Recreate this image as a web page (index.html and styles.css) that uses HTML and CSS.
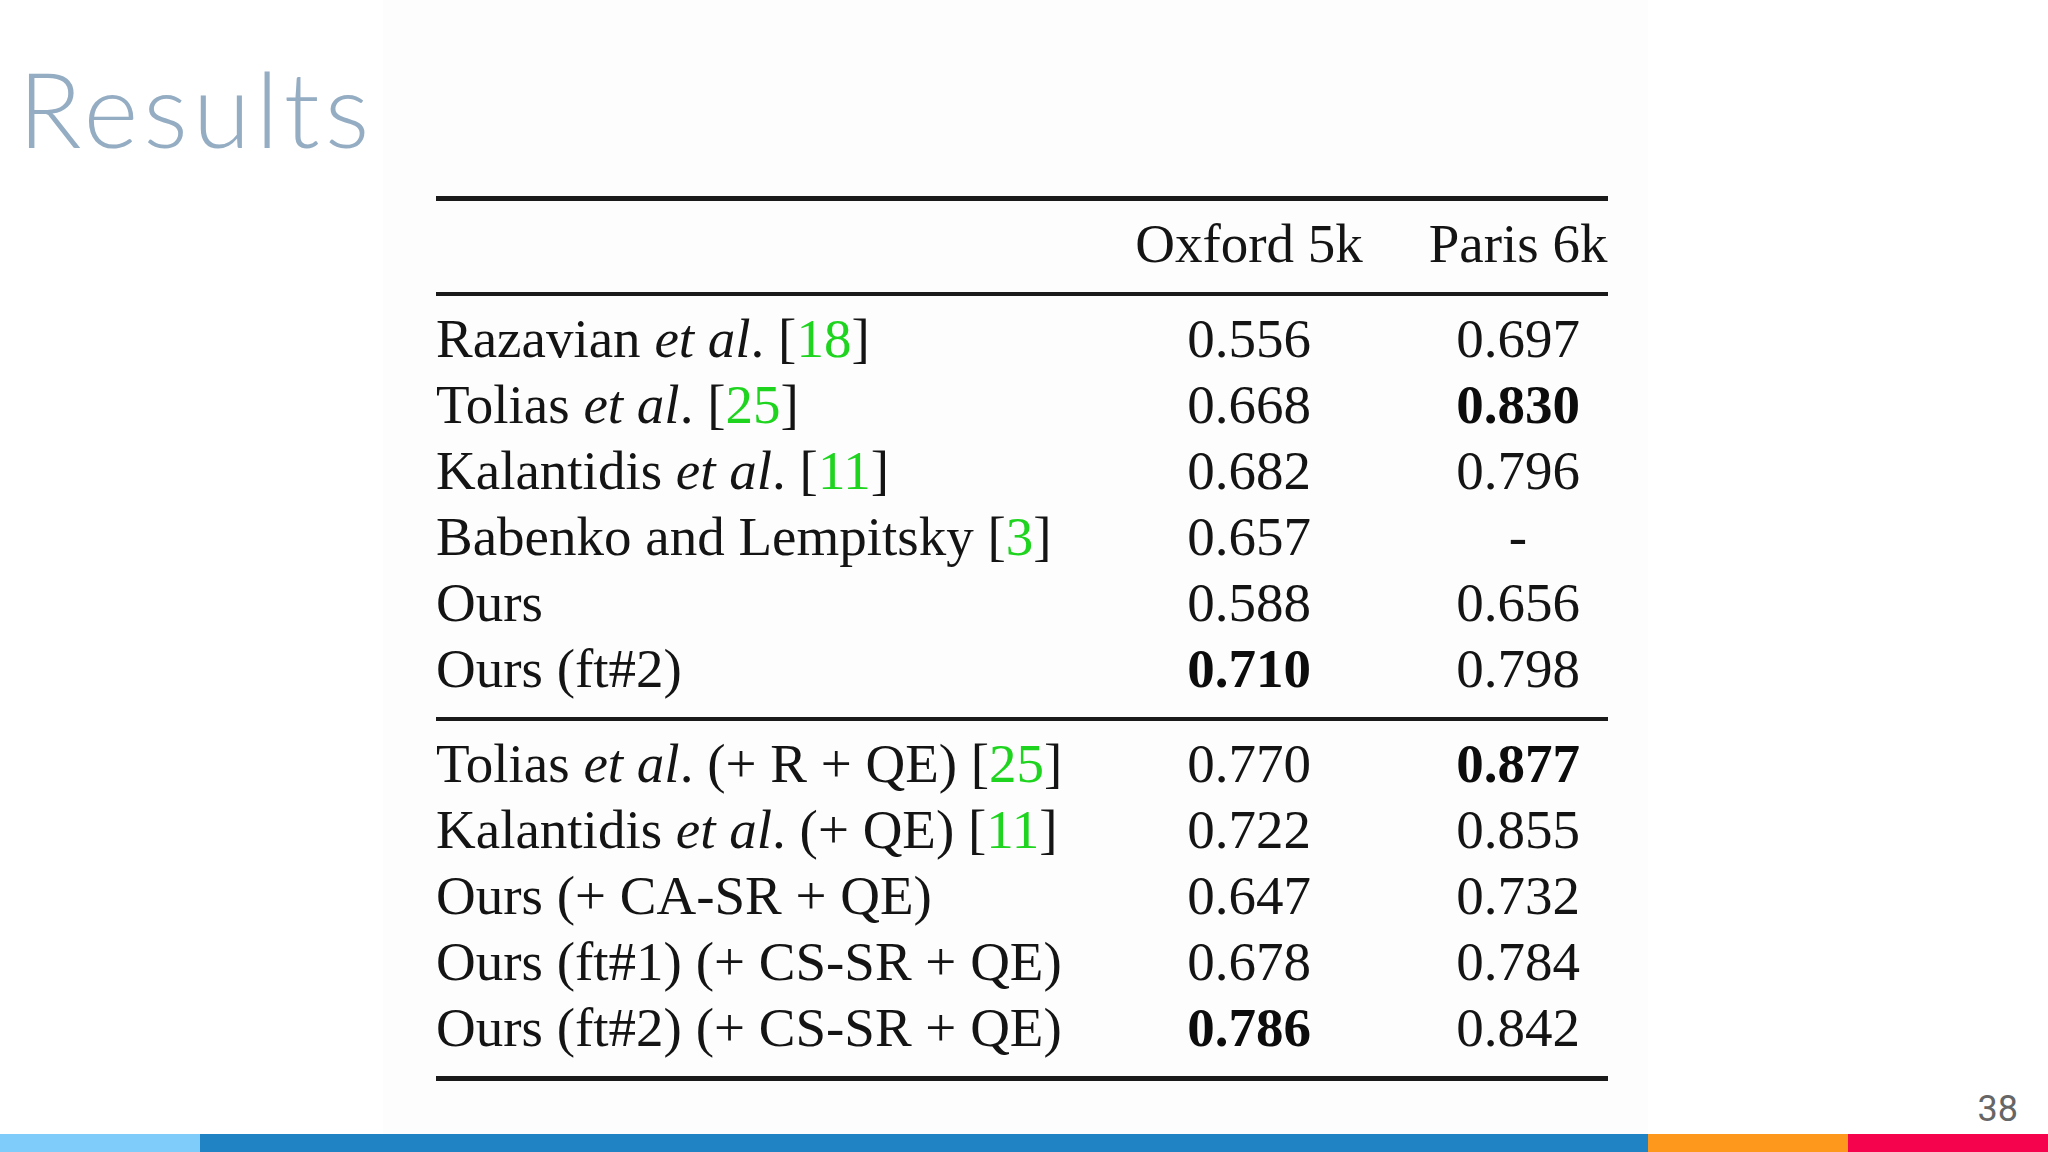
FILE: index.html
```html
<!DOCTYPE html>
<html lang="en">
<head>
<meta charset="utf-8">
<title>Results</title>
<link rel="stylesheet" href="styles.css">
</head>
<body>
<div class="slide">
  <div class="main">
    <div class="left">
      <h1 class="title">Results</h1>
    </div>
    <div class="panel">
      <div class="tbl">
        <div class="rule thick"></div>
        <div class="section">
          <div class="row">
            <div class="c1"></div>
            <div class="c2">Oxford 5k</div>
            <div class="c3">Paris 6k</div>
          </div>
        </div>
        <div class="rule"></div>
        <div class="section">
          <div class="row">
            <div class="c1">Razavian <i>et al</i>. [<span class="cite">18</span>]</div>
            <div class="c2">0.556</div>
            <div class="c3">0.697</div>
          </div>
          <div class="row">
            <div class="c1">Tolias <i>et al</i>. [<span class="cite">25</span>]</div>
            <div class="c2">0.668</div>
            <div class="c3"><b>0.830</b></div>
          </div>
          <div class="row">
            <div class="c1">Kalantidis <i>et al</i>. [<span class="cite">11</span>]</div>
            <div class="c2">0.682</div>
            <div class="c3">0.796</div>
          </div>
          <div class="row">
            <div class="c1">Babenko and Lempitsky [<span class="cite">3</span>]</div>
            <div class="c2">0.657</div>
            <div class="c3">-</div>
          </div>
          <div class="row">
            <div class="c1">Ours</div>
            <div class="c2">0.588</div>
            <div class="c3">0.656</div>
          </div>
          <div class="row">
            <div class="c1">Ours (ft#2)</div>
            <div class="c2"><b>0.710</b></div>
            <div class="c3">0.798</div>
          </div>
        </div>
        <div class="rule"></div>
        <div class="section">
          <div class="row">
            <div class="c1">Tolias <i>et al</i>. (+ R + QE) [<span class="cite">25</span>]</div>
            <div class="c2">0.770</div>
            <div class="c3"><b>0.877</b></div>
          </div>
          <div class="row">
            <div class="c1">Kalantidis <i>et al</i>. (+ QE) [<span class="cite">11</span>]</div>
            <div class="c2">0.722</div>
            <div class="c3">0.855</div>
          </div>
          <div class="row">
            <div class="c1">Ours (+ CA-SR + QE)</div>
            <div class="c2">0.647</div>
            <div class="c3">0.732</div>
          </div>
          <div class="row">
            <div class="c1">Ours (ft#1) (+ CS-SR + QE)</div>
            <div class="c2">0.678</div>
            <div class="c3">0.784</div>
          </div>
          <div class="row">
            <div class="c1">Ours (ft#2) (+ CS-SR + QE)</div>
            <div class="c2"><b>0.786</b></div>
            <div class="c3">0.842</div>
          </div>
        </div>
        <div class="rule thick"></div>
      </div>
    </div>
    <div class="right">
      <div class="pagenum">38</div>
    </div>
  </div>
  <div class="bar">
    <div class="seg seg-light"></div>
    <div class="seg seg-blue"></div>
    <div class="seg seg-orange"></div>
    <div class="seg seg-red"></div>
  </div>
</div>
</body>
</html>
```

FILE: styles.css
```css
html, body {
  margin: 0;
  padding: 0;
  background: #ffffff;
}

.slide {
  width: 2048px;
  height: 1152px;
  display: flex;
  flex-direction: column;
  overflow: hidden;
}

.main {
  display: flex;
  height: 1134px;
}

.left {
  width: 383px;
  flex: none;
}

.title {
  margin: 0;
  padding: 55px 0 0 18px;
  font-family: Lato, "Open Sans", sans-serif;
  font-weight: 300;
  font-size: 105px;
  line-height: 105px;
  color: #95adc3;
  letter-spacing: 5px;
  white-space: nowrap;
}

.panel {
  width: 1265px;
  flex: none;
  background: #fdfdfd;
  padding: 196px 0 0 53px;
  box-sizing: border-box;
}

.tbl {
  width: 1172px;
  font-family: "Liberation Serif", "Times New Roman", serif;
  font-size: 55px;
  color: #141414;
}

.rule {
  height: 4px;
  background: #1a1a1a;
}

.rule.thick {
  height: 5px;
}

.section {
  padding: 10px 0 15px;
}

.row {
  display: grid;
  grid-template-columns: 1fr 230px 180px;
  column-gap: 64px;
  line-height: 66px;
  height: 66px;
  white-space: nowrap;
}

.c1 {
  text-align: left;
}

.c2, .c3 {
  text-align: center;
}

.row b {
  font-weight: 700;
  color: #0c0c0c;
}

.cite {
  color: #1ed41e;
}

.right {
  flex: 1;
  display: flex;
  flex-direction: column;
  justify-content: flex-end;
  align-items: flex-end;
  padding: 0 30px 7px 0;
}

.pagenum {
  font-family: Roboto, "Liberation Sans", sans-serif;
  font-size: 36px;
  line-height: 36px;
  color: #666666;
}

.bar {
  display: flex;
  height: 18px;
}

.seg {
  height: 100%;
}

.seg-light {
  width: 200px;
  background: #7fcbf9;
}

.seg-blue {
  width: 1448px;
  background: #1f83c4;
}

.seg-orange {
  width: 200px;
  background: #fd981c;
}

.seg-red {
  width: 200px;
  background: #f5034d;
}
```
